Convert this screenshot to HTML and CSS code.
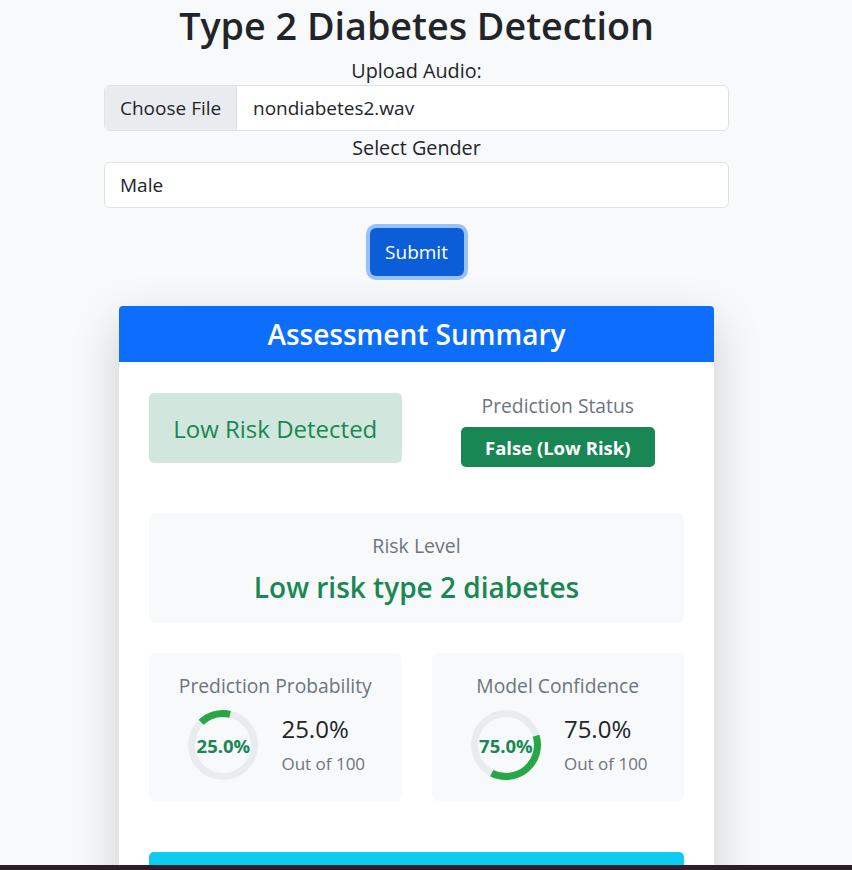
FILE: index.html
```html
<!DOCTYPE html>
<html lang="en">
<head>
<meta charset="utf-8">
<title>Type 2 Diabetes Detection</title>
<link rel="stylesheet" href="styles.css">
</head>
<body>
<div class="page">
  <h1 class="title">Type 2 Diabetes Detection</h1>
  <form class="upload-form">
    <label class="field-label">Upload Audio:</label>
    <div class="file-input">
      <span class="file-btn">Choose File</span>
      <span class="file-name">nondiabetes2.wav</span>
    </div>
    <label class="field-label">Select Gender</label>
    <div class="select-input">Male</div>
    <div class="submit-row">
      <span class="submit-btn">Submit</span>
    </div>
  </form>

  <section class="card">
    <header class="card-header">Assessment Summary</header>
    <div class="card-body">
      <div class="row-top">
        <div class="alert-low">Low Risk Detected</div>
        <div class="status-col">
          <div class="muted-title">Prediction Status</div>
          <span class="badge-success">False (Low Risk)</span>
        </div>
      </div>

      <div class="risk-box">
        <div class="risk-label">Risk Level</div>
        <div class="risk-value">Low risk type 2 diabetes</div>
      </div>

      <div class="metrics">
        <div class="metric-box">
          <div class="muted-title">Prediction Probability</div>
          <div class="metric-body">
            <div class="ring">
              <svg width="70" height="70" viewBox="0 0 70 70">
                <circle cx="35" cy="35" r="31.5" fill="none" stroke="#e9ecef" stroke-width="7"/>
                <path d="M13.1 12.35 A31.5 31.5 0 0 1 42.09 4.31" fill="none" stroke="#28a745" stroke-width="7"/>
              </svg>
              <span class="ring-text">25.0%</span>
            </div>
            <div class="metric-values">
              <div class="metric-value">25.0%</div>
              <div class="metric-sub">Out of 100</div>
            </div>
          </div>
        </div>
        <div class="metric-box">
          <div class="muted-title">Model Confidence</div>
          <div class="metric-body">
            <div class="ring">
              <svg width="70" height="70" viewBox="0 0 70 70">
                <circle cx="35" cy="35" r="31.5" fill="none" stroke="#e9ecef" stroke-width="7"/>
                <path d="M65.1 25.8 A31.5 31.5 0 0 1 20.7 63.07" fill="none" stroke="#28a745" stroke-width="7"/>
              </svg>
              <span class="ring-text">75.0%</span>
            </div>
            <div class="metric-values">
              <div class="metric-value">75.0%</div>
              <div class="metric-sub">Out of 100</div>
            </div>
          </div>
        </div>
      </div>

      <div class="info-btn"></div>
    </div>
  </section>
</div>
<div class="taskbar"></div>
</body>
</html>
```

FILE: styles.css
```css
* { box-sizing: border-box; }

html, body {
  margin: 0;
  background: #f8f9fa;
  font-family: "Open Sans", "Noto Sans", sans-serif;
  color: #212529;
  overflow: hidden;
}

.page {
  padding-right: 19px;
}

.title {
  margin: 0;
  text-align: center;
  font-size: 37.7px;
  font-weight: 600;
  line-height: 52px;
}

.upload-form {
  width: 625px;
  margin: 0 auto;
  padding-top: 7px;
}

.field-label {
  display: block;
  text-align: center;
  font-size: 19.8px;
  line-height: 24px;
  margin-bottom: 2px;
}

.file-input {
  display: flex;
  height: 46px;
  background: #fff;
  border: 1px solid #dee2e6;
  border-radius: 6px;
  overflow: hidden;
  font-size: 19px;
  margin-bottom: 5px;
}

.file-btn {
  display: flex;
  align-items: center;
  padding: 0 15px;
  width: 132px;
  background: #e9ecef;
  border-right: 1px solid #dee2e6;
  white-space: nowrap;
}

.file-name {
  display: flex;
  align-items: center;
  padding-left: 16px;
}

.select-input {
  display: flex;
  align-items: center;
  height: 46px;
  padding-left: 15px;
  background: #fff;
  border: 1px solid #dee2e6;
  border-radius: 6px;
  font-size: 19px;
}

.submit-row {
  display: flex;
  justify-content: center;
  padding-top: 20px;
}

.submit-btn {
  display: flex;
  align-items: center;
  justify-content: center;
  width: 94px;
  height: 48px;
  background: #0b5ed7;
  color: #fff;
  font-size: 19px;
  border-radius: 6px;
  box-shadow: 0 0 0 4px #98c1f9;
}

.card {
  width: 595px;
  margin: 30px auto 0;
  background: #fff;
  border-radius: 6px 6px 0 0;
  box-shadow: 0 16px 48px rgba(0, 0, 0, 0.175);
}

.card-header {
  height: 56px;
  background: #0d6efd;
  color: #fff;
  font-size: 28px;
  font-weight: 600;
  display: flex;
  align-items: center;
  justify-content: center;
  border-radius: 4px 4px 0 0;
}

.card-body {
  padding: 31px 30px 0;
}

.row-top {
  display: grid;
  grid-template-columns: 1fr 1fr;
  column-gap: 30px;
}

.alert-low {
  height: 70px;
  background: #d1e7dd;
  color: #198754;
  border-radius: 5px;
  display: flex;
  align-items: center;
  justify-content: center;
  font-size: 24px;
  font-weight: 500;
}

.status-col {
  display: flex;
  flex-direction: column;
  align-items: center;
  padding-top: 1px;
}

.muted-title {
  color: #6c757d;
  font-size: 19.3px;
  font-weight: 500;
  line-height: 24px;
  white-space: nowrap;
}

.badge-success {
  margin-top: 9px;
  width: 194px;
  height: 40px;
  background: #198754;
  color: #fff;
  font-weight: 700;
  font-size: 18.5px;
  border-radius: 5px;
  display: flex;
  align-items: center;
  justify-content: center;
}

.risk-box {
  margin-top: 46px;
  height: 110px;
  background: #f8f9fa;
  border-radius: 6px;
  text-align: center;
  padding-top: 21px;
}

.risk-label {
  color: #6c757d;
  font-size: 19.5px;
  font-weight: 500;
  line-height: 24px;
}

.risk-value {
  color: #198754;
  font-size: 28px;
  font-weight: 600;
  line-height: 36px;
  margin-top: 11px;
}

.metrics {
  display: grid;
  grid-template-columns: 1fr 1fr;
  column-gap: 30px;
  margin-top: 30px;
}

.metric-box {
  height: 148px;
  background: #f8f9fa;
  border-radius: 6px;
  display: flex;
  flex-direction: column;
  align-items: center;
  padding-top: 21px;
}

.metric-body {
  display: flex;
  align-items: center;
  gap: 23px;
  margin-top: 12px;
  padding-left: 3px;
}

.ring {
  position: relative;
  width: 70px;
  height: 70px;
}

.ring svg { display: block; }

.ring-text {
  position: absolute;
  inset: 0;
  display: flex;
  align-items: center;
  justify-content: center;
  color: #198754;
  font-weight: 700;
  font-size: 18.5px;
  white-space: nowrap;
}

.metric-value {
  font-size: 24px;
  line-height: 30px;
}

.metric-sub {
  color: #6c757d;
  font-size: 17px;
  line-height: 24px;
  margin-top: 8px;
}

.info-btn {
  margin-top: 51px;
  height: 40px;
  background: #0dcaf0;
  border-radius: 5px 5px 0 0;
}

.taskbar {
  position: fixed;
  left: 0;
  right: 0;
  bottom: 0;
  height: 5px;
  background: #2a1f27;
}
```
